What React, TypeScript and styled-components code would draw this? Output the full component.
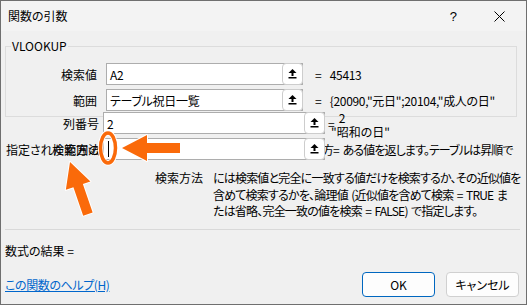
import React from "react";
import styled, { createGlobalStyle } from "styled-components";

const GlobalStyle = createGlobalStyle`
  html, body {
    margin: 0;
    padding: 0;
    background: #f0f0f0;
  }
  body {
    font-family: "Noto Sans CJK JP", "Noto Sans", sans-serif;
    font-size: 12px;
    color: #000;
  }
  * {
    box-sizing: border-box;
  }
`;

const ORANGE = "#fa6a0a";

function UpIcon() {
  return (
    <svg width="9" height="10" viewBox="0 0 9 10">
      <path d="M4.5 0 L0.5 4 L8.5 4 Z" fill="#000" />
      <rect x="3.5" y="3.5" width="2" height="3.5" fill="#000" />
      <rect x="0.5" y="8" width="8" height="1.5" fill="#000" />
    </svg>
  );
}

function CloseIcon() {
  return (
    <svg width="11" height="11" viewBox="0 0 11 11">
      <path d="M0.5 0.5 L10.5 10.5 M10.5 0.5 L0.5 10.5" stroke="#000" strokeWidth="1" />
    </svg>
  );
}

// arrow pointing left, tip at the origin
function arrowPoints(len: number) {
  return `0,0 25,-13 25,-5 ${len},-5 ${len},5 25,5 25,13`;
}

function Annotations() {
  return (
    <Overlay width="527" height="305" viewBox="0 0 527 305">
      <ellipse cx="108" cy="148" rx="7.5" ry="15" fill="none" stroke="#fff" strokeWidth="5.5" />
      <ellipse cx="108" cy="148" rx="7.5" ry="15" fill="none" stroke={ORANGE} strokeWidth="3.5" />
      <polygon
        points={arrowPoints(58)}
        transform="translate(122 148)"
        fill={ORANGE}
        stroke="#fff"
        strokeWidth="2"
        paintOrder="stroke"
        strokeLinejoin="round"
      />
      <polygon
        points={arrowPoints(55)}
        transform="translate(70 162) rotate(71)"
        fill={ORANGE}
        stroke="#fff"
        strokeWidth="2"
        paintOrder="stroke"
        strokeLinejoin="round"
      />
    </Overlay>
  );
}

export default function App() {
  return (
    <>
      <GlobalStyle />
      <Window>
        <TitleBar>
          <Title>関数の引数</Title>
          <HelpMark>?</HelpMark>
          <CloseIcon />
        </TitleBar>

        <Group>
          <Legend>VLOOKUP</Legend>
          <ArgRow>
            <ArgLabel>検索値</ArgLabel>
            <Field $width={197}>
              <FieldText>A2</FieldText>
              <RefButton>
                <UpIcon />
              </RefButton>
            </Field>
            <Eq>=</Eq>
            <Value>45413</Value>
          </ArgRow>
          <ArgRow>
            <ArgLabel>範囲</ArgLabel>
            <Field $width={197}>
              <FieldText>テーブル祝日一覧</FieldText>
              <RefButton>
                <UpIcon />
              </RefButton>
            </Field>
            <Eq>=</Eq>
            <Value>{'{20090,"元日";20104,"成人の日"'}</Value>
          </ArgRow>
        </Group>

        <ShiftRow $first>
          <ShiftLabel>列番号</ShiftLabel>
          <Field $width={222}>
            <FieldText>2</FieldText>
            <RefButton>
              <UpIcon />
            </RefButton>
          </Field>
          <GhostValue>
            =<Raised>2</Raised>
            <Ghost $top={8}>"昭和の日"</Ghost>
          </GhostValue>
        </ShiftRow>

        <ShiftRow>
          <ShiftLabel $left>
            指定された範囲の
            <Ghost $right>検索方法</Ghost>
          </ShiftLabel>
          <Field $width={222}>
            <Caret />
            <RefButton>
              <UpIcon />
            </RefButton>
          </Field>
          <BehindValue>方= ある値を返します。テーブルは昇順で</BehindValue>
        </ShiftRow>

        <Help>
          <HelpName>検索方法</HelpName>
          <HelpText>
            には検索値と完全に一致する値だけを検索するか、その近似値を
            <br />
            含めて検索するかを、論理値 (近似値を含めて検索 = TRUE ま
            <br />
            たは省略、完全一致の値を検索 = FALSE) で指定します。
          </HelpText>
        </Help>

        <Divider />
        <Result>数式の結果 =</Result>

        <Footer>
          <HelpLink href="#">この関数のヘルプ(H)</HelpLink>
          <Buttons>
            <DialogButton $primary>OK</DialogButton>
            <DialogButton>キャンセル</DialogButton>
          </Buttons>
        </Footer>

        <Annotations />
      </Window>
    </>
  );
}

const Window = styled.div`
  position: relative;
  width: 527px;
  height: 305px;
  display: flex;
  flex-direction: column;
  border: 1px solid #6f6f6f;
  background: #f0f0f0;
  font-feature-settings: "palt";
  overflow: hidden;
`;

const TitleBar = styled.div`
  flex: none;
  display: flex;
  align-items: center;
  height: 30px;
  padding: 0 21px 0 7px;
  background: #f3f3f3;
`;

const Title = styled.div`
  flex: 1;
  line-height: 16px;
`;

const HelpMark = styled.span`
  margin-right: 37px;
  font-family: "Liberation Sans", sans-serif;
  font-size: 13px;
`;

const Group = styled.fieldset`
  flex: none;
  min-width: 0;
  margin: 8px 9px 0 4px;
  padding: 10px 0 5px 0;
  border: 1px solid #dcdcdc;
  display: flex;
  flex-direction: column;
  gap: 4px;
`;

const Legend = styled.legend`
  margin-left: 5px;
  padding: 0 1px;
  line-height: 14px;
`;

const ArgRow = styled.div`
  display: flex;
  align-items: center;
  height: 22px;
`;

const ArgLabel = styled.div`
  width: 91px;
  margin-right: 9px;
  text-align: right;
`;

const Field = styled.div<{ $width: number }>`
  position: relative;
  z-index: 1;
  flex: none;
  display: flex;
  align-items: center;
  width: ${(p) => p.$width}px;
  height: 22px;
  padding-left: 3px;
  border: 1px solid #adadad;
  background: #fff;
`;

const FieldText = styled.span`
  flex: 1;
  white-space: nowrap;
  letter-spacing: -0.3px;
`;

const Caret = styled.span`
  width: 1px;
  height: 16px;
  margin-left: 1px;
  background: #000;
`;

const RefButton = styled.div`
  display: flex;
  align-items: center;
  justify-content: center;
  width: 21px;
  height: 22px;
  margin: -1px -1px -1px auto;
  border: 1px solid #cdcdcd;
  border-radius: 4px;
  background: #fff;
`;

const Eq = styled.span`
  margin: 0 8px 0 12px;
`;

const Value = styled.span`
  white-space: nowrap;
  letter-spacing: -0.3px;
`;

const ShiftRow = styled.div<{ $first?: boolean }>`
  flex: none;
  display: flex;
  align-items: center;
  height: 22px;
  margin-top: ${(p) => (p.$first ? "-5px" : "4px")};
  padding-left: 5px;
`;

const ShiftLabel = styled.div<{ $left?: boolean }>`
  position: relative;
  width: 93px;
  margin-right: 4px;
  white-space: nowrap;
  text-align: ${(p) => (p.$left ? "left" : "right")};
`;

const Ghost = styled.span<{ $top?: number; $right?: boolean }>`
  position: absolute;
  white-space: nowrap;
  ${(p) => (p.$right ? "right: -1px; top: 0;" : `left: 3px; top: ${p.$top ?? 0}px;`)}
`;

const GhostValue = styled.span`
  position: relative;
  margin-left: 3px;
  white-space: nowrap;
`;

const Raised = styled.span`
  position: relative;
  top: -6px;
  margin-left: 4px;
`;

const BehindValue = styled.span`
  margin-left: -3px;
  white-space: nowrap;
  letter-spacing: -0.9px;
  word-spacing: 2px;
`;

const Help = styled.div`
  flex: none;
  display: flex;
  margin: 10px 0 0 154px;
  line-height: 16.5px;
`;

const HelpName = styled.div`
  flex: none;
  width: 58px;
  white-space: nowrap;
`;

const HelpText = styled.div`
  white-space: nowrap;
  letter-spacing: -0.8px;
  word-spacing: 1.5px;
`;

const Divider = styled.div`
  flex: none;
  height: 1px;
  margin: 9px 6px 0 4px;
  background: #d9d9d9;
`;

const Result = styled.div`
  margin: 13px 0 0 4px;
  line-height: 16px;
`;

const Footer = styled.div`
  display: flex;
  align-items: center;
  margin-top: auto;
  padding: 0 7px 7px 4px;
`;

const HelpLink = styled.a`
  color: #0066cc;
  text-decoration: underline;
  letter-spacing: -0.4px;
`;

const Buttons = styled.div`
  display: flex;
  gap: 11px;
  margin-left: auto;
`;

const DialogButton = styled.button<{ $primary?: boolean }>`
  width: 73px;
  height: 25px;
  padding: 0;
  border: 1px solid ${(p) => (p.$primary ? "#0067c0" : "#d0d0d0")};
  border-radius: 4px;
  background: #fdfdfd;
  font: inherit;
  color: #000;
`;

const Overlay = styled.svg`
  position: absolute;
  top: -1px;
  left: -1px;
  pointer-events: none;
  z-index: 5;
`;
